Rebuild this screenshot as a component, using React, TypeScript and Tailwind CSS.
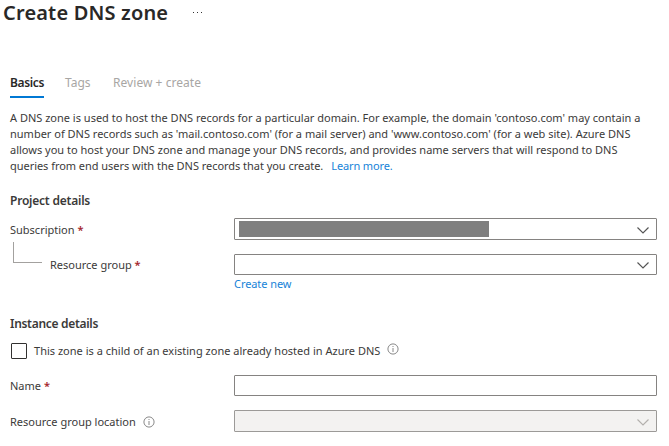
import React from "react";

function Chevron({ muted = false }: { muted?: boolean }) {
  return (
    <svg className="mt-[2px] mr-[7px] ml-auto shrink-0" width="12" height="7" viewBox="0 0 12 7" fill="none" stroke={muted ? "#b3b0ad" : "#555"} strokeWidth="1.15">
      <path d="M.5.5L6 6 11.5.5" />
    </svg>
  );
}

function Info() {
  return (
    <svg width="12" height="12" viewBox="0 0 12 12" fill="none" stroke="#6b6b6b" strokeWidth="0.8">
      <circle cx="6" cy="6" r="5.1" />
      <path d="M6 5v4M6 3v1" />
    </svg>
  );
}

function Required() {
  return <span className="font-semibold text-[#a4262c]"> *</span>;
}

export default function App() {
  return (
    <main className="h-[446px] w-[669px] overflow-hidden bg-white font-['Noto_Sans',sans-serif] text-[11px] leading-4 text-[#3b3a39]">
      <header className="flex h-[26px] items-center pl-[3px]">
        <h1 className="w-[190px] whitespace-nowrap text-[20px] font-semibold leading-[26px] tracking-[0.17px] text-[#292827]">Create DNS zone</h1>
        <span className="mb-[2px] flex gap-[3px]">
          <i className="size-[1px] bg-[#333]" /><i className="size-[1px] bg-[#333]" /><i className="size-[1px] bg-[#333]" />
        </span>
      </header>
      <nav className="mt-[46px] ml-[10px] flex h-[26px] text-[12px] leading-[21px] text-[#a8a6a4]">
        <span className="w-[34px] whitespace-nowrap border-b-2 border-[#0078d4] font-semibold tracking-[-0.35px] text-[#292827]">Basics</span>
        <span className="ml-[21px] w-[48px]">Tags</span>
        <span className="whitespace-nowrap tracking-[0.05px]">Review + create</span>
      </nav>
      <p className="mt-[12px] ml-[10px] whitespace-nowrap">
        A DNS zone is used to host the DNS records for a particular domain. For example, the domain 'contoso.com' may contain a<br />
        number of DNS records such as 'mail.contoso.com' (for a mail server) and 'www.contoso.com' (for a web site). Azure DNS<br />
        allows you to host your DNS zone and manage your DNS records, and provides name servers that will respond to DNS<br />
        <span className="tracking-[-0.04px]">queries from end users with the DNS records that you create.</span>
        <a className="ml-[8px] tracking-[-0.13px] text-[#1683d8]">Learn more.</a>
      </p>
      <h2 className="mt-[18px] ml-[10px] text-[12px] font-semibold leading-[17px] tracking-[-0.22px]">Project details</h2>
      <div className="mt-[9px] ml-[10px] flex h-[22px] items-center">
        <label className="w-[224px] pt-[2px]">Subscription<Required /></label>
        <div className="flex h-[22px] w-[423px] items-center rounded-[1px] border border-[#858381] pl-[4px]">
          <span className="h-[16px] w-[250px] bg-[#7f7f7f]" /><Chevron />
        </div>
      </div>
      <div className="mt-[14px] ml-[10px] flex h-[21px] items-center">
        <span className="-mt-[24px] mr-[8px] ml-[3px] h-[21px] w-[29px] border-b border-l border-[#a3a19f]" />
        <label className="w-[184px] pt-[1px]">Resource group<Required /></label>
        <div className="flex h-[21px] w-[423px] items-center rounded-[1px] border border-[#858381]"><Chevron /></div>
      </div>
      <a className="mt-[1px] ml-[234px] block tracking-[-0.07px] text-[#1683d8]">Create new</a>
      <h2 className="mt-[24px] ml-[10px] text-[12px] font-semibold tracking-[-0.3px]">Instance details</h2>
      <div className="mt-[11px] ml-[11px] flex h-[16px] items-center">
        <span className="mr-[7px] size-[16px] rounded-[1px] border border-[#323130]" />
        <span className="tracking-[0.01px]">This zone is a child of an existing zone already hosted in Azure DNS</span>
        <span className="mb-[5px] ml-[7px]"><Info /></span>
      </div>
      <div className="mt-[16px] ml-[10px] flex h-[21px] items-center">
        <label className="w-[224px]">Name<Required /></label>
        <span className="h-[21px] w-[423px] rounded-[1px] border border-[#858381]" />
      </div>
      <div className="mt-[14px] ml-[10px] flex h-[22px] items-center">
        <label className="flex w-[224px] items-center gap-[7px] pt-[1px]">Resource group location<Info /></label>
        <div className="flex h-[22px] w-[423px] items-center rounded-[1px] border border-[#9c9a98] bg-[#f3f2f1]"><Chevron muted /></div>
      </div>
    </main>
  );
}
